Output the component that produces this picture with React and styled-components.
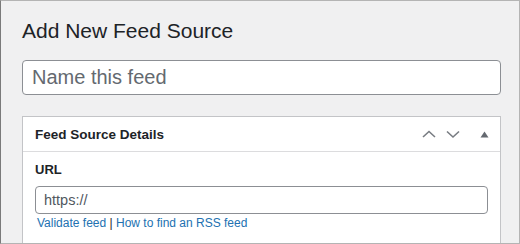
import React from "react";
import styled, { createGlobalStyle } from "styled-components";

const GlobalStyle = createGlobalStyle`
  html, body {
    margin: 0;
    padding: 0;
    background: #f0f0f1;
  }
  * {
    box-sizing: border-box;
  }
`;

const Frame = styled.div`
  width: 520px;
  height: 244px;
  overflow: hidden;
  border: 1px solid #b4b4b4;
  border-left-color: #7a7a7a;
  background: #f0f0f1;
  padding: 15px 18px 0 21px;
  font-family: "Liberation Sans", Arial, sans-serif;
  color: #1d2327;
`;

const Title = styled.h1`
  margin: 0 0 14px;
  font-size: 21px;
  font-weight: 400;
  line-height: 30px;
  color: #1d2327;
`;

const TitleInput = styled.input`
  display: block;
  width: 479px;
  height: 35px;
  margin: 0 0 21px;
  padding: 0 9px;
  border: 1px solid #8c8f94;
  border-radius: 4px;
  background: #fff;
  font-family: inherit;
  font-size: 20px;
  color: #2c3338;
  outline: none;

  &::placeholder {
    color: #646970;
  }
`;

const Postbox = styled.div`
  width: 479px;
  border: 1px solid #c3c4c7;
  background: #fff;
`;

const PostboxHeader = styled.div`
  display: flex;
  align-items: center;
  height: 35px;
  padding: 0 0 0 12px;
  border-bottom: 1px solid #dcdcde;
`;

const PostboxTitle = styled.h2`
  flex: 1;
  margin: 0;
  font-size: 13.5px;
  font-weight: 700;
  color: #1d2327;
`;

const HandleButton = styled.button`
  display: flex;
  align-items: center;
  justify-content: center;
  width: ${(p) => p.$w}px;
  height: 35px;
  margin-right: ${(p) => p.$gap || 0}px;
  padding: 0;
  border: 0;
  background: none;
  color: ${(p) => p.$color || "#787c82"};
`;

const Inside = styled.div`
  padding: 9px 12px 12px;
`;

const Label = styled.label`
  display: block;
  font-size: 13px;
  font-weight: 700;
  line-height: 18px;
  margin-bottom: 7px;
`;

const UrlInput = styled.input`
  display: block;
  width: 100%;
  height: 28px;
  padding: 0 8px;
  border: 1px solid #8c8f94;
  border-radius: 4px;
  font-family: inherit;
  font-size: 14.5px;
  color: #50575e;
  outline: none;
`;

const Links = styled.div`
  margin-top: 1px;
  padding-left: 2px;
  font-size: 12px;
  line-height: 16px;
  color: #1d2327;

  a {
    color: #2271b1;
    text-decoration: none;
  }
`;

const Chevron = ({ up }) => (
  <svg width="14" height="10" viewBox="0 0 14 10" fill="none">
    <path
      d={up ? "M1 8 L7 2.5 L13 8" : "M1 2.5 L7 8 L13 2.5"}
      stroke="currentColor"
      strokeWidth="1.6"
    />
  </svg>
);

const Triangle = () => (
  <svg width="9" height="7" viewBox="0 0 9 7">
    <path d="M4.5 0.5 L8.5 6.5 L0.5 6.5 Z" fill="currentColor" />
  </svg>
);

export default function App() {
  return (
    <Frame>
      <GlobalStyle />
      <Title>Add New Feed Source</Title>
      <TitleInput placeholder="Name this feed" />
      <Postbox>
        <PostboxHeader>
          <PostboxTitle>Feed Source Details</PostboxTitle>
          <HandleButton $w={24}>
            <Chevron up />
          </HandleButton>
          <HandleButton $w={24} $gap={3}>
            <Chevron />
          </HandleButton>
          <HandleButton $w={32} $color="#646970">
            <Triangle />
          </HandleButton>
        </PostboxHeader>
        <Inside>
          <Label>URL</Label>
          <UrlInput defaultValue="https://" />
          <Links>
            <a href="#validate">Validate feed</a> |{" "}
            <a href="#rss">How to find an RSS feed</a>
          </Links>
        </Inside>
      </Postbox>
    </Frame>
  );
}
